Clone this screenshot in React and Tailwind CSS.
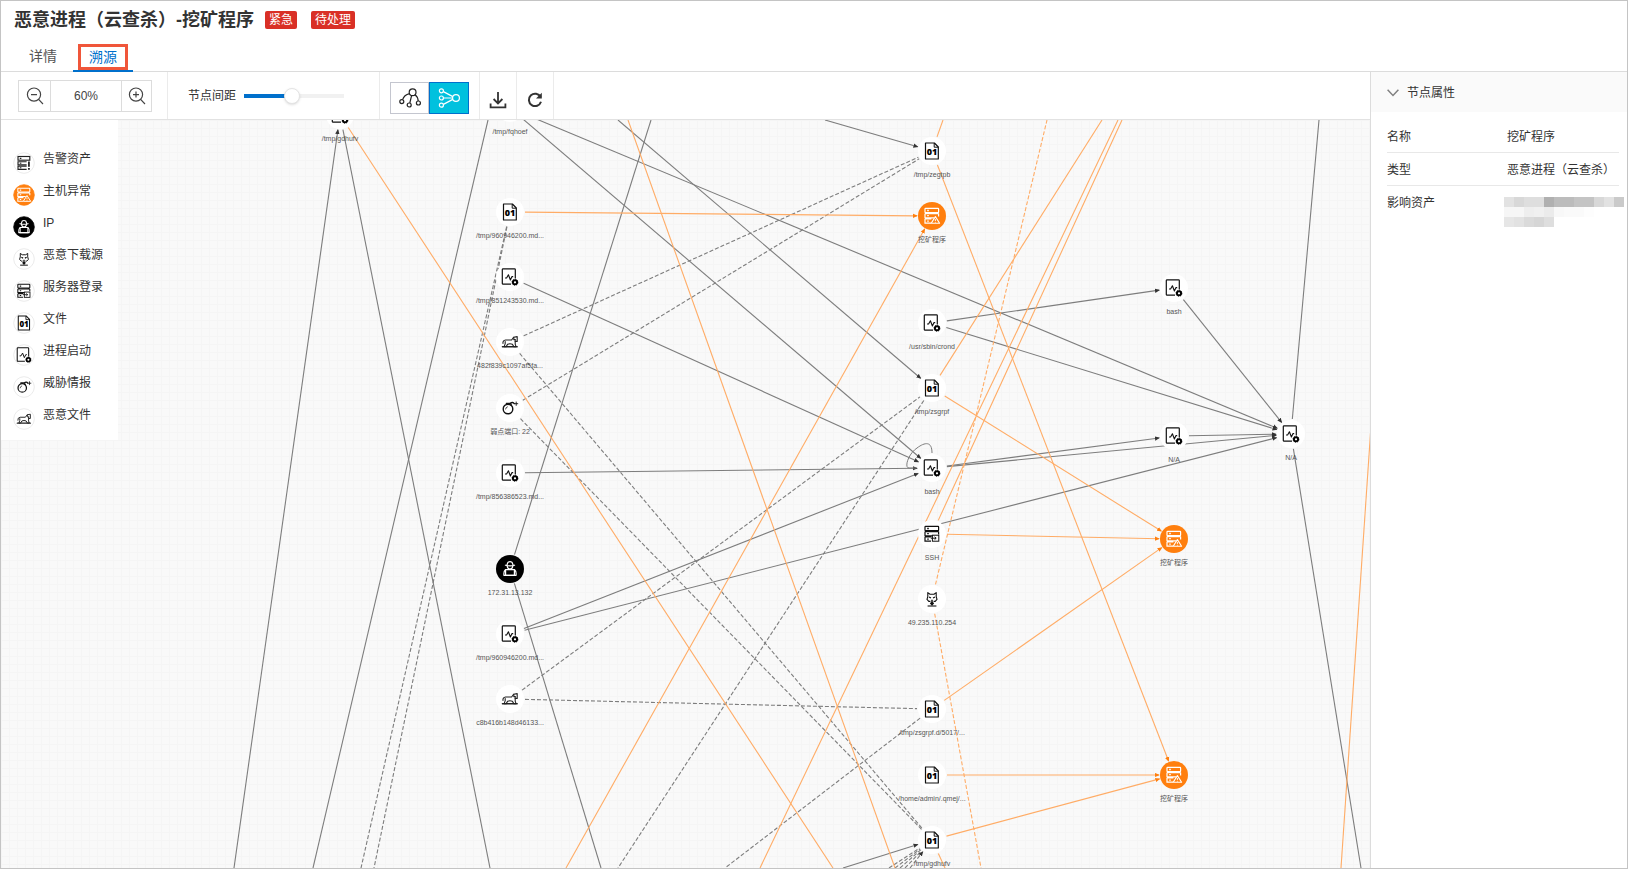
import { useState } from 'react'
import clsx from 'clsx'

const GREY = '#7d7d7d'
const ORANGE = '#ffac66'

/* Icon drawings, all centred on 0,0 */

const FileIcon = () => (
  <g>
    <path d="M-6.5 -8H2.4L6.3 -4V8H-6.5Z" fill="none" stroke="#111" strokeWidth="1.2" strokeLinejoin="round" />
    <path d="M2.2 -8V-3.8H6.3" fill="none" stroke="#111" strokeWidth="1" />
    <text x="0" y="4" textAnchor="middle" fontSize="9" fontWeight="800" fill="#000" className="font-['Open_Sans',sans-serif]">01</text>
  </g>
)

const ProcessIcon = () => (
  <g>
    <path d="M5.3 1.6V-7.4Q5.3 -8.2 4.5 -8.2H-6.9Q-7.7 -8.2 -7.7 -7.4V6.4Q-7.7 7.2 -6.9 7.2H1" fill="none" stroke="#111" strokeWidth="1.2" />
    <path d="M-5 1H-3.4L-1.6 -2.2L0.4 3L2 -0.4H3.2" fill="none" stroke="#111" strokeWidth="1.1" strokeLinejoin="round" />
    <circle cx="5" cy="5.3" r="2.1" fill="none" stroke="#000" strokeWidth="1.9" />
    <circle cx="5" cy="5.3" r="3" fill="none" stroke="#000" strokeWidth="0.8" strokeDasharray="1.2 1.1" />
  </g>
)

const ServerBars = ({ color }) => (
  <g fill="none" stroke={color} strokeWidth="1.2">
    <rect x="-7" y="-7.6" width="13.6" height="4.2" rx="0.6" />
    <path d="M-5.4 -3.4V-2.4M5 -3.4V-2.4M-5.4 1.8V3M-7 -2.4H6.6M-7 -2.4V1.8H2M6.6 -2.4V0.4M-7 3V7.2H-1M-7 3H-0.6" />
    <path d="M-4.8 -5.5H-3.2M-4.8 -0.3H-3.2M-4.8 5.1H-3.2" strokeWidth="1.3" />
  </g>
)

const AlertIcon = () => (
  <g>
    <ServerBars color="#fff" />
    <path d="M3.4 0.6L7.6 7.2H-0.8Z" fill="#ff7f0e" stroke="#fff" strokeWidth="1.1" strokeLinejoin="round" />
    <path d="M3.4 3V5M3.4 5.8V6.6" stroke="#fff" strokeWidth="0.9" />
  </g>
)

const AssetIcon = () => (
  <g fill="none" stroke="#222" strokeWidth="1.3">
    <rect x="-6.8" y="-7.4" width="13.4" height="4.2" />
    <path d="M3 -1.4H-6.8V2H3M3 3.6H-6.8V7.2H3M-4.8 -5.3H-3M-4.8 0.3H-3M-4.8 5.4H-3" />
    <path d="M5.6 -1.6V4.4M5.6 5.8V7.6" strokeWidth="2" />
  </g>
)

const LoginIcon = () => (
  <g>
    <ServerBars color="#111" />
    <rect x="0.4" y="1.2" width="6.4" height="6" fill="#fff" stroke="#111" strokeWidth="1" />
    <path d="M-1.2 4.2H4M2.6 2.8L4.2 4.2L2.6 5.6" fill="none" stroke="#111" strokeWidth="1" />
  </g>
)

const HackerIcon = () => (
  <g fill="none" stroke="#fff" strokeWidth="1.2" strokeLinejoin="round" strokeLinecap="round">
    <path d="M-4.6 -3.8Q0 -2.4 4.6 -3.8M-3 -4.2L-2 -6.8Q0 -7.8 2 -6.8L3 -4.2" />
    <path d="M-2.8 -3Q-2.6 0 0 0Q2.6 0 2.8 -3" />
    <rect x="-4.4" y="0.6" width="8.8" height="5.8" />
    <path d="M-4.6 0.8Q-6.6 2.4 -6 6.4H6Q6.6 2.4 4.6 0.8" />
  </g>
)

const SourceIcon = () => (
  <g fill="none" stroke="#111" strokeWidth="1.1" strokeLinejoin="round">
    <path d="M-1.6 2.4H-3.2L-5 0.4L-4.2 -2.4V-6.4L-2 -4.8H2L4.2 -6.4V-2.4L5 0.4L3.2 2.4H1.6" />
    <path d="M-3 -2L-1 -1M3 -2L1 -1" strokeWidth="1.3" />
    <path d="M0 0.8V6M-1.6 3.8L0 5.8L1.6 3.8" strokeWidth="1.5" />
    <path d="M-4.4 7H4.4" />
  </g>
)

const BombIcon = () => (
  <g fill="none" stroke="#111" strokeWidth="1.4" strokeLinecap="round">
    <circle cx="-2" cy="1" r="4.8" />
    <path d="M-3.6 -4.6L0.6 -4.6L1.4 -2.6M0 -4.6Q3 -6.4 4.2 -4.4" />
    <path d="M6.2 -6V-2.6M4.6 -4.3H7.8" strokeWidth="0.9" />
    <path d="M-4.4 1Q-4.2 -0.8 -2.6 -1.2" strokeWidth="0.8" />
  </g>
)

const HorseIcon = () => (
  <g fill="none" stroke="#222" strokeWidth="1.1" strokeLinejoin="round" strokeLinecap="round">
    <path d="M-7 1.4Q-7.4 -1.6 -4.4 -2H1.6L3.6 -4.8L7.2 -5.4V-0.6H5.2V2.2L6 4.6H3.8L2.4 2.2Q0 1.2 -2.4 2.2L-3.8 4.6H-5.8L-4.8 1.6V-0.4" />
    <path d="M3.8 -4.6V-2.4H5.4M5.2 -0.6V-1.8" />
    <path d="M-7.6 4.8H7.2" strokeWidth="1.4" />
  </g>
)

const ICONS = {
  asset: { draw: AssetIcon, fill: '#fff' },
  alert: { draw: AlertIcon, fill: '#ff7f0e' },
  ip: { draw: HackerIcon, fill: '#000' },
  source: { draw: SourceIcon, fill: '#fff' },
  login: { draw: LoginIcon, fill: '#fff' },
  file: { draw: FileIcon, fill: '#fff' },
  process: { draw: ProcessIcon, fill: '#fff' },
  threat: { draw: BombIcon, fill: '#fff' },
  malware: { draw: HorseIcon, fill: '#fff' },
}

const LEGEND = [
  ['asset', '告警资产'],
  ['alert', '主机异常'],
  ['ip', 'IP'],
  ['source', '恶意下载源'],
  ['login', '服务器登录'],
  ['file', '文件'],
  ['process', '进程启动'],
  ['threat', '威胁情报'],
  ['malware', '恶意文件'],
]

const NODES = {
  gdhufvTop: { x: 339, y: -5, type: 'process', label: '/tmp/gdhufv' },
  fqhoef: { x: 509, y: -12, type: 'process', label: '/tmp/fqhoef' },
  f960: { x: 509, y: 92, type: 'file', label: '/tmp/960946200.md...' },
  p851: { x: 509, y: 157, type: 'process', label: '/tmp/851243530.md...' },
  m482: { x: 509, y: 222, type: 'malware', label: '482f839c1097af5fa...' },
  port: { x: 509, y: 288, type: 'threat', label: '弱点端口: 22' },
  p856: { x: 509, y: 353, type: 'process', label: '/tmp/856386523.md...' },
  ip: { x: 509, y: 449, type: 'ip', label: '172.31.13.132' },
  p960: { x: 509, y: 514, type: 'process', label: '/tmp/960946200.md...' },
  mc8b: { x: 509, y: 579, type: 'malware', label: 'c8b416b148d46133...' },
  zegtpb: { x: 931, y: 31, type: 'file', label: '/tmp/zegtpb' },
  alertA: { x: 931, y: 96, type: 'alert', label: '挖矿程序' },
  crond: { x: 931, y: 203, type: 'process', label: '/usr/sbin/crond' },
  zsgrpf: { x: 931, y: 268, type: 'file', label: '/tmp/zsgrpf' },
  bash: { x: 931, y: 348, type: 'process', label: 'bash' },
  ssh: { x: 931, y: 414, type: 'login', label: 'SSH' },
  src: { x: 931, y: 479, type: 'source', label: '49.235.110.254' },
  zsgrpfD: { x: 931, y: 589, type: 'file', label: '/tmp/zsgrpf.d/5017/...' },
  home: { x: 931, y: 655, type: 'file', label: '/home/admin/.qmej/...' },
  gdhufv: { x: 931, y: 720, type: 'file', label: '/tmp/gdhufv' },
  bashC: { x: 1173, y: 168, type: 'process', label: 'bash' },
  naC: { x: 1173, y: 316, type: 'process', label: 'N/A' },
  alertB: { x: 1173, y: 419, type: 'alert', label: '挖矿程序' },
  alertC: { x: 1173, y: 655, type: 'alert', label: '挖矿程序' },
  naD: { x: 1290, y: 314, type: 'process', label: 'N/A' },
}

// An end is a node id, or a point where the edge leaves the view
const EDGES = [
  { from: [233, 748], to: 'gdhufvTop' },
  { from: 'gdhufvTop', to: [489, 748] },
  { from: [487, 0], to: [312, 748] },
  { from: [650, 0], to: 'ip', arrow: false },
  { from: 'ip', to: [600, 748] },
  { from: 'fqhoef', to: 'bash' },
  { from: 'fqhoef', to: 'naD' },
  { from: [617, 0], to: 'zsgrpf' },
  { from: [824, 0], to: 'zegtpb' },
  { from: 'p851', to: 'bash' },
  { from: 'p856', to: 'bash' },
  { from: 'p960', to: 'bash' },
  { from: 'p960', to: 'naD' },
  { from: 'bash', to: 'naC' },
  { from: 'bash', to: 'naD' },
  { from: 'naC', to: 'naD' },
  { from: 'crond', to: 'bashC' },
  { from: 'crond', to: 'naD' },
  { from: 'bashC', to: 'naD' },
  { from: 'naD', to: [1318, 0] },
  { from: 'naD', to: [1360, 748] },
  { from: [842, 748], to: 'gdhufv' },
  { from: 'f960', to: [360, 748], dashed: true },
  { from: 'f960', to: [373, 748], dashed: true },
  { from: 'm482', to: 'zegtpb', dashed: true, arrow: false },
  { from: 'port', to: 'zegtpb', dashed: true, arrow: false },
  { from: 'm482', to: 'gdhufv', dashed: true, arrow: false },
  { from: 'port', to: 'gdhufv', dashed: true, arrow: false },
  { from: 'mc8b', to: 'zsgrpf', dashed: true, arrow: false },
  { from: 'mc8b', to: 'zsgrpfD', dashed: true, arrow: false },
  { from: 'zsgrpf', to: [617, 748], dashed: true },
  { from: 'zsgrpfD', to: [724, 748], dashed: true },
  { from: [888, 748], to: 'gdhufv', dashed: true, arrow: false },
  { from: [894, 748], to: 'gdhufv', dashed: true, arrow: false },
  { from: [899, 748], to: 'gdhufv', dashed: true, arrow: false },
  { from: [904, 748], to: 'gdhufv', dashed: true, arrow: false },
  { from: [909, 748], to: 'gdhufv', dashed: true },
  { from: 'gdhufvTop', to: [832, 748], orange: true },
  { from: 'f960', to: 'alertA', orange: true },
  { from: [627, 0], to: [894, 748], orange: true },
  { from: [565, 748], to: 'alertA', orange: true },
  { from: 'zegtpb', to: [942, 0], orange: true },
  { from: 'zegtpb', to: 'alertC', orange: true },
  { from: 'zsgrpf', to: [1101, 0], orange: true },
  { from: 'zsgrpf', to: 'alertB', orange: true },
  { from: 'ssh', to: 'alertB', orange: true },
  { from: 'ssh', to: [1121, 0], orange: true },
  { from: [759, 748], to: [1117, 0], orange: true },
  { from: 'src', to: [1046, 0], orange: true, dashed: true },
  { from: 'src', to: [980, 748], orange: true, dashed: true },
  { from: 'zsgrpfD', to: 'alertB', orange: true },
  { from: 'home', to: 'alertC', orange: true },
  { from: 'gdhufv', to: 'alertC', orange: true },
  { from: 'gdhufv', to: [944, 748], orange: true },
  { from: [1370, 306], to: [1340, 748], orange: true },
]

const PIXELS = [
  ['bg-[#e2e2e2]', 'bg-[#d8d8d8]', 'bg-[#dedede]', 'bg-[#dedede]', 'bg-[#b0b0b0]', 'bg-[#bcbcbc]', 'bg-[#bcbcbc]', 'bg-[#c4c4c4]', 'bg-[#c4c4c4]', 'bg-[#d8d8d8]', 'bg-[#e2e2e2]', 'bg-[#cacaca]'],
  ['bg-[#f6f6f6]', 'bg-[#f6f6f6]', 'bg-[#eeeeee]', 'bg-[#f0f0f0]', 'bg-[#ebebeb]', 'bg-[#f8f8f8]', 'bg-[#fafafa]', 'bg-[#fafafa]', 'bg-[#fdfdfd]'],
  ['bg-[#e6e6e6]', 'bg-[#e2e2e2]', 'bg-[#dadada]', 'bg-[#d6d6d6]', 'bg-[#dedede]'],
]

const NODE_GAP = 15

const resolve = (end) => (Array.isArray(end) ? { x: end[0], y: end[1], node: false } : { ...NODES[end], node: true })

const Edge = ({ from, to, orange, dashed, arrow = true }) => {
  const a = resolve(from)
  const b = resolve(to)
  const length = Math.hypot(b.x - a.x, b.y - a.y)
  const ux = (b.x - a.x) / length
  const uy = (b.y - a.y) / length
  const start = a.node ? NODE_GAP : 0
  const end = b.node ? NODE_GAP : 0

  return (
    <line
      x1={a.x + ux * start}
      y1={a.y + uy * start}
      x2={b.x - ux * end}
      y2={b.y - uy * end}
      stroke={orange ? ORANGE : GREY}
      strokeWidth="1.1"
      strokeDasharray={dashed ? '4 2' : undefined}
      markerEnd={b.node && arrow ? `url(#${orange ? 'arrow-orange' : 'arrow-grey'})` : undefined}
    />
  )
}

const Node = ({ x, y, type, label }) => {
  const { draw: Draw, fill } = ICONS[type]
  return (
    <g transform={`translate(${x} ${y})`}>
      <circle r="14" fill={fill} />
      <Draw />
      <text y="26" textAnchor="middle" className="fill-[#555] text-[7px]">{label}</text>
    </g>
  )
}

const Arrow = ({ id, color }) => (
  <marker id={id} viewBox="0 0 6 6" refX="5" refY="3" markerWidth="5" markerHeight="5" markerUnits="userSpaceOnUse" orient="auto">
    <path d="M0 0.4L6 3L0 5.6Z" fill={color} />
  </marker>
)

const Graph = () => (
  <svg className="absolute inset-0 h-full w-full" role="img" aria-label="溯源">
    <defs>
      <Arrow id="arrow-grey" color="#333" />
      <Arrow id="arrow-orange" color="#ff7f0e" />
    </defs>
    {EDGES.map((edge, index) => (
      <Edge key={index} {...edge} />
    ))}
    <path d="M931 333C931 321 924 322 916 328C907 334 903 348 908 348H915" fill="none" stroke={GREY} />
    {Object.entries(NODES).map(([id, node]) => (
      <Node key={id} {...node} />
    ))}
  </svg>
)

const Legend = () => (
  <ul className="absolute top-0 left-0 w-[117px] bg-white pt-6 pb-2 pl-3">
    {LEGEND.map(([type, label]) => {
      const { draw: Draw, fill } = ICONS[type]
      return (
        <li key={type} className="flex h-8 items-start gap-2 text-xs text-[#333]">
          <svg className="mt-2 shrink-0" width="22" height="22" viewBox="-11 -11 22 22" aria-hidden="true">
            <circle r="10.3" fill={fill} stroke={fill === '#fff' ? '#e6e6e6' : fill} strokeWidth="0.8" />
            <g transform="scale(0.88)">
              <Draw />
            </g>
          </svg>
          <span className="mt-[5px] leading-5">{label}</span>
        </li>
      )
    })}
  </ul>
)

const Magnifier = ({ plus }) => (
  <svg width="18" height="18" viewBox="0 0 18 18" fill="none" stroke="#444" strokeWidth="1.2" aria-hidden="true">
    <circle cx="8" cy="7.6" r="6.6" />
    <path d="M12.6 12.4L17 17M5 7.6H11" />
    {plus && <path d="M8 4.6V10.6" />}
  </svg>
)

const TreeIcon = () => (
  <svg width="22" height="20" viewBox="0 0 22 20" fill="none" stroke="#222" strokeWidth="1.2" aria-hidden="true">
    <circle cx="13.6" cy="4.2" r="3.4" />
    <circle cx="2.8" cy="13.6" r="2" />
    <circle cx="10.2" cy="17" r="2" />
    <circle cx="19.4" cy="15" r="2" />
    <path d="M10.6 5.6Q5 7 3.6 11.6M12.6 7.6L10.8 15M16 6.8Q19 9 19.2 13" />
  </svg>
)

const FlowIcon = () => (
  <svg width="22" height="20" viewBox="0 0 22 20" fill="none" stroke="#fff" strokeWidth="1.2" aria-hidden="true">
    <circle cx="18" cy="10" r="3.4" />
    <circle cx="3.4" cy="2.8" r="2" />
    <circle cx="3.4" cy="10" r="2" />
    <circle cx="3.4" cy="17.2" r="2" />
    <path d="M5.4 3.6L14.8 8.6M5.4 10H14.6M5.4 16.4L14.8 11.4" />
  </svg>
)

const Toolbar = () => {
  const [spacing, setSpacing] = useState(48)
  const [layout, setLayout] = useState('flow')

  return (
    <div className="flex h-12 items-stretch border-b border-[#e2e2e2] bg-white">
      <div className="flex items-start border-r border-[#ebebeb] pt-2 pr-[15px] pl-[17px]">
        <div className="flex h-8 border border-[#dcdcdc]">
          <button type="button" aria-label="缩小" className="flex w-[31px] items-center justify-center">
            <Magnifier />
          </button>
          <output className="flex w-[72px] items-center justify-center border-x border-[#dcdcdc] text-xs text-[#444]">60%</output>
          <button type="button" aria-label="放大" className="flex w-[29px] items-center justify-center">
            <Magnifier plus />
          </button>
        </div>
      </div>
      <div className="flex w-[212px] items-center gap-2 border-r border-[#ebebeb] pl-5">
        <label htmlFor="spacing" className="text-xs text-[#333]">节点间距</label>
        <input
          id="spacing"
          type="range"
          value={spacing}
          onChange={(e) => setSpacing(e.target.value)}
          style={{ backgroundImage: `linear-gradient(to right, #0070cc ${spacing}%, #f1f1f1 ${spacing}%)` }}
          className="h-1 w-[100px] appearance-none [&::-webkit-slider-thumb]:h-4 [&::-webkit-slider-thumb]:w-4 [&::-webkit-slider-thumb]:appearance-none [&::-webkit-slider-thumb]:rounded-full [&::-webkit-slider-thumb]:border [&::-webkit-slider-thumb]:border-[#e4e4e4] [&::-webkit-slider-thumb]:bg-white [&::-webkit-slider-thumb]:shadow"
        />
      </div>
      <div className="flex items-end border-r border-[#ebebeb] px-2.5 pb-[5px]">
        <button
          type="button"
          aria-label="树形布局"
          onClick={() => setLayout('tree')}
          className={clsx('flex h-8 w-[39px] items-center justify-center border', layout === 'tree' ? 'border-[#0070cc] bg-[#00c1de]' : 'border-[#c4c6cf] bg-white')}
        >
          <TreeIcon />
        </button>
        <button
          type="button"
          aria-label="流向布局"
          onClick={() => setLayout('flow')}
          className={clsx('flex h-8 w-10 items-center justify-center border', layout === 'flow' ? 'border-[#0070cc] bg-[#00c1de]' : 'border-[#c4c6cf] bg-[#9aa]')}
        >
          <FlowIcon />
        </button>
      </div>
      <button type="button" aria-label="下载" className="flex w-[37px] items-center justify-center border-r border-[#ebebeb] pt-2">
        <svg width="18" height="18" viewBox="0 0 18 18" fill="none" stroke="#333" strokeWidth="1.8" aria-hidden="true">
          <path d="M9 1V12M4.6 8L9 12.4L13.4 8M1.6 12.4V16.4H16.4V12.4" />
        </svg>
      </button>
      <button type="button" aria-label="刷新" className="flex w-[37px] items-center justify-center border-r border-[#ebebeb] pt-2">
        <svg width="18" height="18" viewBox="0 0 18 18" fill="none" stroke="#333" strokeWidth="2" aria-hidden="true">
          <path d="M14.6 6A6.2 6.2 0 1 0 15 10.8" />
          <path d="M15.8 1.8V7.6H10Z" fill="#333" stroke="none" />
        </svg>
      </button>
    </div>
  )
}

const PropertyPanel = () => (
  <aside className="w-[257px] shrink-0 border-l border-[#dcdcdc] bg-white text-xs text-[#333]">
    <button type="button" className="flex h-10 w-full items-center gap-2 bg-[#fafafa] pt-px pl-4">
      <svg width="12" height="8" viewBox="0 0 12 8" fill="none" stroke="#808080" strokeWidth="1.5" aria-hidden="true">
        <path d="M0.6 0.8L6 6.4L11.4 0.8" />
      </svg>
      节点属性
    </button>
    <dl className="pt-2 pr-2 pl-4">
      <div className="flex h-[33px] items-center border-b border-[#e8e8e8] pt-px">
        <dt className="w-[120px] shrink-0">名称</dt>
        <dd className="whitespace-nowrap">挖矿程序</dd>
      </div>
      <div className="flex h-[33px] items-center border-b border-[#e8e8e8] pt-px">
        <dt className="w-[120px] shrink-0">类型</dt>
        <dd className="whitespace-nowrap">恶意进程（云查杀）</dd>
      </div>
      <div className="flex pt-[7px]">
        <dt className="w-[117px] shrink-0 leading-5">影响资产</dt>
        <dd className="pt-1">
          {PIXELS.map((row, index) => (
            <div key={index} className="flex">
              {row.map((shade, col) => (
                <span key={col} className={clsx('h-2.5 w-2.5 shrink-0', shade)} />
              ))}
            </div>
          ))}
        </dd>
      </div>
    </dl>
  </aside>
)

const App = () => {
  return (
    <div className="flex min-h-screen flex-col overflow-hidden border border-[#c4c4c4] bg-white font-['Liberation_Sans','Noto_Sans_CJK_SC',sans-serif]">
      <header className="flex h-[37px] items-center pl-[13px]">
        <h1 className="text-lg font-bold text-[#333]">恶意进程（云查杀）-挖矿程序</h1>
        <span className="ml-[11px] rounded-xs bg-[#d93026] px-1 text-xs leading-[18px] text-white">紧急</span>
        <span className="ml-3.5 rounded-xs bg-[#d93026] px-1 text-xs leading-[18px] text-white">待处理</span>
      </header>

      <nav className="flex h-[34px] items-stretch border-b border-[#dcdcdc] pl-3 text-sm">
        <a href="#detail" className="flex w-[60px] items-center justify-center pt-0.5 text-[#555]">详情</a>
        <a href="#trace" className="-mb-px flex w-[60px] items-end justify-center border-b-2 border-[#0070cc] text-[#0070cc]">
          <span className="border-3 border-[#f0563a] px-2 leading-5">溯源</span>
        </a>
      </nav>

      <div className="flex flex-1">
        <main className="flex min-w-0 flex-1 flex-col">
          <Toolbar />
          <div className="relative flex-1 overflow-hidden bg-[#f9f9f9] bg-[linear-gradient(to_right,#f5f5f5_1px,transparent_1px),linear-gradient(to_bottom,#f5f5f5_1px,transparent_1px)] bg-[size:8px_8px]">
            <Graph />
            <Legend />
          </div>
        </main>
        <PropertyPanel />
      </div>
    </div>
  )
}

export default App
